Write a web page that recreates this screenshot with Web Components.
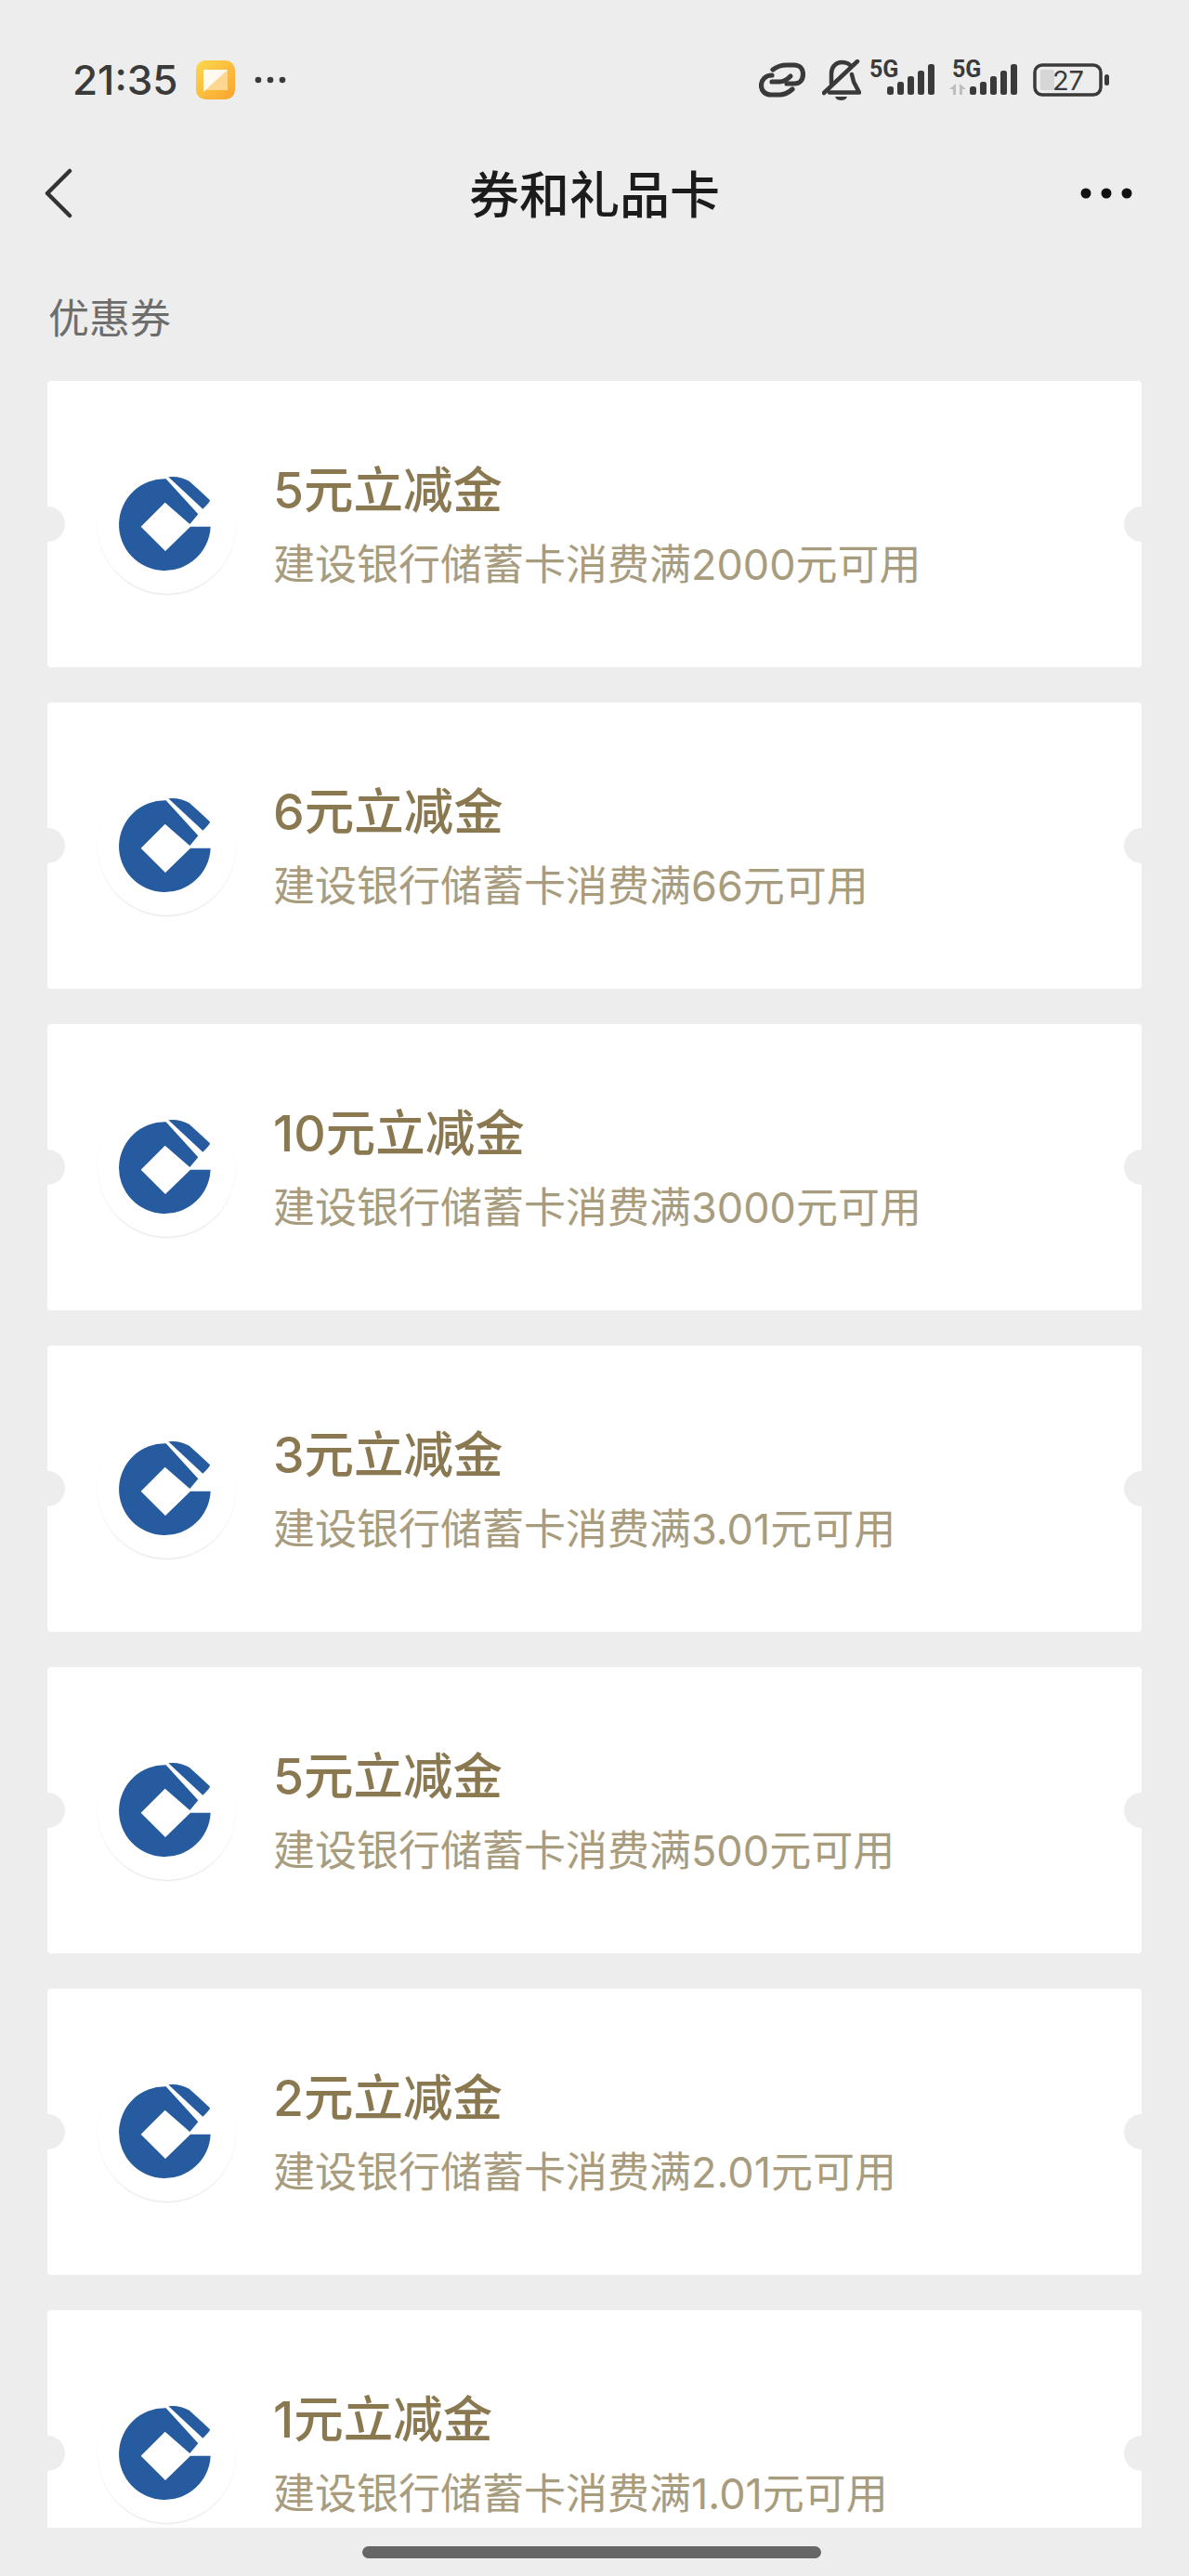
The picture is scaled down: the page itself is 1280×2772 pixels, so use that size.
<!DOCTYPE html>
<html lang="zh">
<head>
<meta charset="utf-8">
<title>券和礼品卡</title>
<style>
html, body { margin: 0; padding: 0; background: #ededed; }
body { font-family: Inter, "Noto Sans CJK SC", sans-serif; }
</style>
</head>
<body>
<wallet-page>
    <status-bar slot="top" time="21:35" battery="27"></status-bar>
    <nav-bar slot="top">券和礼品卡</nav-bar>
    <section-label slot="top">优惠券</section-label>
    <coupon-card><span slot="title">5元立减金</span>建设银行储蓄卡消费满2000元可用</coupon-card>
    <coupon-card><span slot="title">6元立减金</span>建设银行储蓄卡消费满66元可用</coupon-card>
    <coupon-card><span slot="title">10元立减金</span>建设银行储蓄卡消费满3000元可用</coupon-card>
    <coupon-card><span slot="title">3元立减金</span>建设银行储蓄卡消费满3.01元可用</coupon-card>
    <coupon-card><span slot="title">5元立减金</span>建设银行储蓄卡消费满500元可用</coupon-card>
    <coupon-card><span slot="title">2元立减金</span>建设银行储蓄卡消费满2.01元可用</coupon-card>
    <coupon-card><span slot="title">1元立减金</span>建设银行储蓄卡消费满1.01元可用</coupon-card>
</wallet-page>

<script>
class WalletPage extends HTMLElement {
    constructor() {
        super();
        this.attachShadow({ mode: 'open' });
        this.shadowRoot.innerHTML = `
<style>
:host { display: flex; flex-direction: column; height: 2772px; overflow: hidden; background: #ededed; }
.list { flex: 1; min-height: 0; overflow: hidden; margin: 0 51px; display: flex; flex-direction: column; gap: 38px; }
.home { flex: none; height: 52px; display: flex; justify-content: center; padding: 20px 7px 0 0; box-sizing: border-box; }
.home div { width: 494px; height: 13px; border-radius: 7px; background: #666; }
</style>
<slot name="top"></slot>
<div class="list"><slot></slot></div>
<div class="home"><div></div></div>`;
    }
}

class StatusBar extends HTMLElement {
    constructor() {
        super();
        this.attachShadow({ mode: 'open' });
    }

    connectedCallback() {
        const bars = `
<rect x="19" y="35" width="7" height="9" rx="2.5"/>
<rect x="30" y="30" width="7" height="14" rx="2.5"/>
<rect x="41" y="24" width="7" height="20" rx="2.5"/>
<rect x="52" y="18" width="7" height="26" rx="2.5"/>
<rect x="63" y="11" width="7" height="33" rx="2.5"/>`;
        this.shadowRoot.innerHTML = `
<style>
:host { display: flex; justify-content: space-between; align-items: center; height: 64px; margin-top: 54px; padding: 0 86px 0 78px; color: #3a3a3a; }
.left, .right { display: flex; align-items: center; }
.time { font: 500 44px/64px Inter, sans-serif; width: 133px; }
.app { width: 42px; height: 42px; }
.more { margin-left: 21px; width: 34px; height: 8px; }
svg { display: block; fill: #3a3a3a; }
svg text { font: 700 25px Roboto, sans-serif; }
.link { width: 50px; height: 38px; margin-right: 18px; }
.bell { width: 42px; height: 44px; margin-right: 9px; }
.sig { width: 71px; height: 50px; margin-top: -6px; overflow: visible; }
.sig.b { margin-left: 18px; }
.bat { margin-left: 16px; width: 82px; height: 36px; }
</style>
<div class="left">
    <div class="time">${this.getAttribute('time')}</div>
    <svg class="app" viewBox="0 0 42 42">
        <defs><linearGradient id="g" x1="0" y1="0" x2="1" y2="1"><stop offset="0" stop-color="#fcd84e"/><stop offset="1" stop-color="#fba32e"/></linearGradient></defs>
        <rect width="42" height="42" rx="10" fill="url(#g)"/>
        <path d="M8 10h26v22H8z" fill="#fdd68f"/>
        <path d="M8 10h26L8 34z" fill="#fffaf0"/>
    </svg>
    <svg class="more" viewBox="0 0 34 8"><circle cx="4" cy="4" r="3.3"/><circle cx="17" cy="4" r="3.3"/><circle cx="30" cy="4" r="3.3"/></svg>
</div>
<div class="right">
    <svg class="link" viewBox="0 0 50 38" style="fill:none;stroke:#3a3a3a;stroke-width:5.200;stroke-linecap:round">
        <path d="M15 8C20 4 25 3 30 3H38C44 3 47.500 7 47.500 13 47.500 19 44 23 38 23H30"/>
        <path d="M14 14C7 14 2.500 19 2.500 25 2.500 31 7 35 13 35H22C27 35 31 33.500 36 29"/>
        <path d="M14 21H22C27 21 30 19 34 15"/>
    </svg>
    <svg class="bell" viewBox="0 0 42 44" style="fill:none;stroke:#3a3a3a;stroke-width:4.500;stroke-linecap:round;stroke-linejoin:round">
        <path d="M10 26V15C10 8 15 3 21 3 25 3 28 4 30 6"/>
        <path d="M32 16 34 24 40 35.500H8"/>
        <path d="M2 36 38 2"/>
        <path d="M14 40H27C26 43 23 44 20.500 44 18 44 15 43 14 40Z" fill="#3a3a3a" stroke="none"/>
    </svg>
    <svg class="sig" viewBox="0 0 71 50"><text x="0" y="25">5G</text>${bars}</svg>
    <svg class="sig b" viewBox="0 0 71 50"><text x="0" y="25">5G</text>
        <path d="M-3 38l7-6v12H1v-6zM8 32l7 6h-4v6H8z" fill="#bdbdbd"/>${bars}</svg>
    <svg class="bat" viewBox="0 0 82 36">
        <rect x="2" y="2" width="71" height="32" rx="8" fill="none" stroke="#3a3a3a" stroke-width="3.500"/>
        <rect x="8" y="7" width="15" height="22" rx="2" fill="#d6d6d6"/>
        <rect x="77" y="12" width="5" height="12" rx="2.500"/>
        <text x="38" y="29" text-anchor="middle" style="font:400 29px Inter,sans-serif">${this.getAttribute('battery')}</text>
    </svg>
</div>`;
    }
}

class NavBar extends HTMLElement {
    constructor() {
        super();
        this.attachShadow({ mode: 'open' });
        this.shadowRoot.innerHTML = `
<style>
:host { display: grid; grid-template-columns: 1fr auto 1fr; align-items: center; height: 72px; margin-top: 54px; padding: 0 61px; }
.title { font: 500 54px/72px "Noto Sans CJK SC", sans-serif; color: #1c1c1c; margin-top: -3px; }
svg { display: block; }
.back { width: 30px; height: 54px; margin-left: -13px; }
.more { width: 56px; height: 12px; fill: #111; justify-self: end; }
</style>
<svg class="back" viewBox="0 0 30 54"><path d="M27 3 3 27l24 24" fill="none" stroke="#333" stroke-width="4.500" stroke-linecap="round" stroke-linejoin="round"/></svg>
<div class="title"><slot></slot></div>
<svg class="more" viewBox="0 0 56 12"><circle cx="6" cy="6" r="5.500"/><circle cx="28" cy="6" r="5.500"/><circle cx="50" cy="6" r="5.500"/></svg>`;
    }
}

class SectionLabel extends HTMLElement {
    constructor() {
        super();
        this.attachShadow({ mode: 'open' });
        this.shadowRoot.innerHTML = `
<style>
:host { display: block; margin: 0 0 0 52px; padding: 66px 0 40px; font: 400 44px/60px "Noto Sans CJK SC", sans-serif; color: #6d6d6d; }
</style>
<slot></slot>`;
    }
}

class CcbLogo extends HTMLElement {
    constructor() {
        super();
        this.attachShadow({ mode: 'open' });
        this.shadowRoot.innerHTML = `
<style>
:host { display: block; flex: none; width: 149px; height: 150px; border-radius: 50%; background: #fff; box-shadow: 0 2px 2px -1px rgba(0,0,0,.11), 0 0 1px rgba(0,0,0,.05); }
svg { display: block; width: 100%; height: 100%; }
</style>
<svg viewBox="0 0 447 450" fill="#265c9f">
    <path d="M221 79A148 148 0 1 0 365 233H300L219 312 140 233 218 155 298 225 325 193Z"/>
    <path d="M229 73Q262 68 296 86 330 116 363 148 364 154 340 176Z"/>
</svg>`;
    }
}

class CouponCard extends HTMLElement {
    constructor() {
        super();
        this.attachShadow({ mode: 'open' });
        this.shadowRoot.innerHTML = `
<style>
:host { display: flex; flex: none; align-items: center; position: relative; height: 308px; padding-left: 54px; box-sizing: border-box; background: #fff; border-radius: 4px; overflow: hidden; }
:host::before, :host::after { content: ""; position: absolute; top: 135px; width: 38px; height: 38px; border-radius: 50%; background: #ededed; }
:host::before { left: -19px; }
:host::after { right: -19px; }
.text { margin-left: 40px; padding-top: 4px; display: flex; flex-direction: column; }
.title { font-size: 53.5px; line-height: 72px; font-weight: 500; color: #8a7850; }
.desc { font-size: 45px; line-height: 66px; color: #a89c7e; margin-top: 11px; }
</style>
<ccb-logo></ccb-logo>
<div class="text">
    <div class="title"><slot name="title"></slot></div>
    <div class="desc"><slot></slot></div>
</div>`;
    }
}

customElements.define('wallet-page', WalletPage);
customElements.define('status-bar', StatusBar);
customElements.define('nav-bar', NavBar);
customElements.define('section-label', SectionLabel);
customElements.define('ccb-logo', CcbLogo);
customElements.define('coupon-card', CouponCard);
</script>
</body>
</html>
